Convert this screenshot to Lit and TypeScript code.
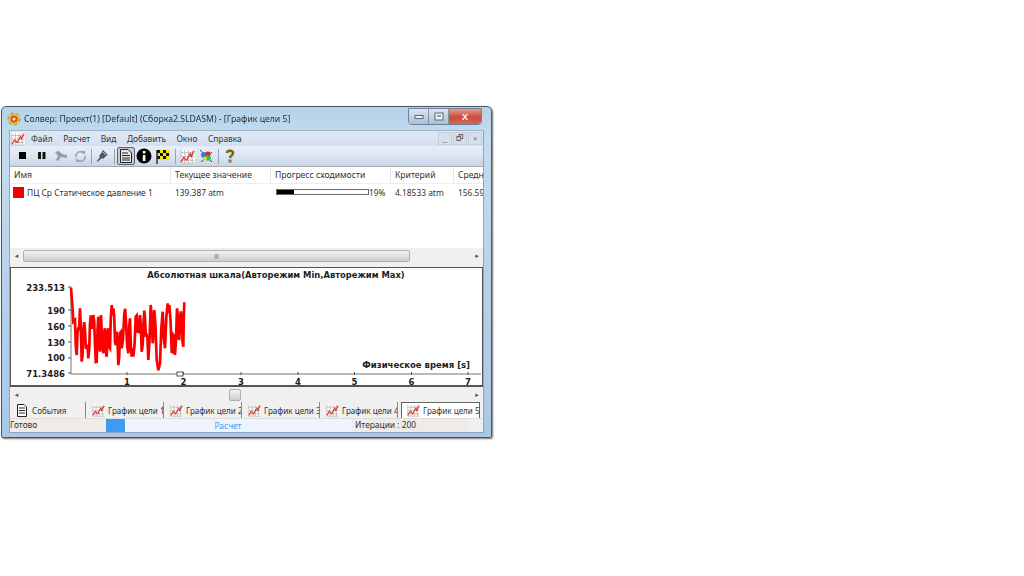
import { LitElement, html, css, svg } from "lit";
import { customElement } from "lit/decorators.js";

function chartIcon(size = 16) {
  return html`<svg class="ic" width=${size} height=${size} viewBox="0 0 16 16">
    <rect x="0.5" y="0.5" width="15" height="15" fill="#fff"/>
    <path d="M1 1V15H15M5 1V15M9 1V15M13 1V15M1 4H15M1 8H15M1 12H15" stroke="#b9b9b9" stroke-width="1" fill="none"/>
    <path d="M1 14L4 9L7 12L11 5L12 8L15 2" stroke="#e8342c" stroke-width="1.4" fill="none"/>
  </svg>`;
}

const TRACE: [number, number][] = [[18,8],[22,60],[25,110],[30,105],[35,210],[40,130],[45,70],[50,230],[55,140],[60,135],[65,190],[70,220],[75,115],[80,120],[85,90],[90,180],[95,230],[100,95],[105,200],[108,90],[115,205],[120,130],[125,215],[130,130],[135,190],[140,60],[145,70],[150,170],[155,140],[160,240],[165,145],[170,190],[178,85],[183,110],[190,205],[195,100],[200,215],[205,215],[212,95],[218,140],[225,90],[230,200],[236,105],[240,100],[245,150],[250,225],[257,60],[263,175],[268,75],[275,225],[285,235],[293,80],[300,190],[308,55],[313,60],[320,200],[325,150],[330,210],[336,70],[340,160],[345,110],[350,100],[355,185],[358,52]];

function tracePoints(): string {
  const out: string[] = [];
  TRACE.forEach(([x, y], i) => {
    out.push(`${(65 + x / 3).toFixed(1)},${(285 + y / 3).toFixed(1)}`);
    const n = TRACE[i + 1];
    if (n && i > 2) {
      const mx = (x + n[0]) / 2;
      const my = (y + n[1]) / 2 + (i % 2 ? 26 : -26);
      out.push(`${(65 + mx / 3).toFixed(1)},${(285 + my / 3).toFixed(1)}`);
    }
  });
  return out.join(" ");
}

@customElement("app-root")
export class AppRoot extends LitElement {
  static styles = css`
    :host { display: block; width: 1024px; height: 576px; background: #fff; overflow: hidden; font-family: "Noto Sans", sans-serif; font-size: 8.6px; color: #333; }
    .page { padding: 106px 0 0 1px; }
    .win { width: 491px; height: 332px; box-sizing: border-box; display: flex; flex-direction: column; border: 1px solid #4a5560; border-radius: 5px 5px 2px 2px; background: linear-gradient(#b4d2ea, #c3dcf0 30px, #a9c8e4); padding: 0 7px 0 7px; filter: blur(0.35px); box-shadow: 1px 1px 2px #777; }
    .title { height: 23px; flex: none; display: flex; align-items: center; gap: 3px; margin-left: -2px; font-size: 8.7px; color: #2a2f35; }
    .title .t { flex: 1; white-space: nowrap; }
    .wb { display: flex; align-self: flex-start; height: 15px; margin: 1px 2px 0 0; border: 1px solid #6d8198; border-radius: 0 0 4px 4px; overflow: hidden; }
    .wb span { display: flex; align-items: center; justify-content: center; width: 19px; background: linear-gradient(#dbe6f1, #aebfd1); border-right: 1px solid #8295a9; }
    .wb span.x { width: 32px; border: none; background: linear-gradient(#e99b8d, #c94a3a 55%, #d06a58); color: #fff; font: bold 9px "Liberation Sans", sans-serif; }
    .inner { flex: none; height: 303px; box-sizing: border-box; display: flex; flex-direction: column; background: #f0f0f0; border: 1px solid #8fa4b8; border-top-color: #a0b4c8; }
    .menu { height: 15px; flex: none; display: flex; align-items: center; background: linear-gradient(#dfe9f5, #d3e0f0); padding-left: 1px; font-size: 8.4px; }
    .menu .items { flex: 1; display: flex; gap: 10.5px; margin-left: 6px; }
    .mb { display: flex; gap: 1px; margin-right: 1px; }
    .mb span { width: 14px; height: 13px; box-sizing: border-box; border: 1px solid #c4cfdb; background: #d5e0ec; color: #666; font: 8px/11px "Liberation Sans", sans-serif; text-align: center; }
    .tools { height: 21px; box-sizing: border-box; flex: none; display: flex; align-items: center; gap: 1px; padding-left: 4px; background: linear-gradient(#e8eef8, #dce6f3 50%, #c7d5e8); border-bottom: 1px solid #a8a8a8; }
    .tb { width: 18px; height: 18px; display: flex; align-items: center; justify-content: center; flex: none; }
    .tb.on { box-sizing: border-box; border: 1px solid #5b6470; border-radius: 2px; background: #c4ccd5; margin-right: -1px; }
    .sep { width: 1px; height: 15px; background: #9aa3ad; margin: 0 1.5px; flex: none; }
    .sep.a { margin: 0 .5px; }
    .list { height: 81px; flex: none; background: #fff; overflow: hidden; }
    .head, .row { display: grid; grid-template-columns: 161px 100px 120px 63px 40px; white-space: nowrap; }
    .head { height: 17px; box-sizing: border-box; align-items: center; border-bottom: 1px solid #eee; }
    .head div { padding-left: 4px; border-right: 1px solid #e7e7e7; height: 100%; line-height: 16px; overflow: hidden; }
    .row { height: 16px; align-items: center; font-size: 8.4px; }
    .row > div { padding-left: 4px; overflow: hidden; }
    .name { display: flex; align-items: center; gap: 3px; padding-left: 3px !important; }
    .sw { width: 11px; height: 11px; background: #f20000; flex: none; }
    .prog { display: flex; align-items: center; gap: 0; padding-left: 5px !important; }
    .bar { width: 91px; height: 4px; border: 1px solid #666; background: #fff; box-sizing: content-box; flex: none; }
    .bar div { height: 100%; background: #000; }
    .hs { height: 15px; flex: none; display: flex; align-items: center; background: #f0f0f0; }
    .arr { width: 12px; flex: none; text-align: center; color: #555; font: 7px "DejaVu Sans", sans-serif; }
    .arr.l { width: 13px; }
    .thumb { box-sizing: border-box; height: 12px; border: 1px solid #b0b0b0; border-radius: 2px; background: linear-gradient(#f2f2f2, #cdcdcd); display: flex; align-items: center; justify-content: center; color: #555; font: 6px "Liberation Sans", sans-serif; flex: none; }
    .grow { flex: 1; }
    .chart { height: 120px; margin-top: 4px; flex: none; box-sizing: border-box; background: #fff; border: 1px solid #555; border-bottom-width: 2px; }
    .chart svg { display: block; overflow: visible; }
    .chart text { font-family: "DejaVu Sans", sans-serif; font-weight: bold; fill: #1d1d1d; font-size: 8.5px; }
    .tabs { height: 16px; flex: none; display: flex; align-items: stretch; background: #f0f0f0; }
    .tab { box-sizing: border-box; width: 78px; flex: none; display: flex; align-items: center; gap: 3px; padding-left: 6px; border-right: 1px solid #888; white-space: nowrap; overflow: hidden; font-size: 8.1px; }
    .tab .ic { flex: none; }
    .tab.ev { width: 76px; gap: 5px; padding-left: 7px; }
    .tab.on { background: #fff; border: 1px solid #666; border-bottom: none; width: 79px; margin-left: 3px; padding-left: 5px; }
    .status { height: 14px; flex: none; display: flex; align-items: center; background: #f0f0f0; font-size: 8.4px; border-top: 1px solid #ddd; box-sizing: border-box; }
    .s1 { width: 96px; flex: none; box-sizing: border-box; height: 100%; background: #f0ebe8; }
    .s2 { width: 19px; height: 100%; background: #3d9bf2; flex: none; }
    .s3 { flex: none; width: 227px; height: 100%; background: #eef4fb; color: #4a9cf0; display: flex; align-items: center; justify-content: center; padding-right: 21px; box-sizing: border-box; }
    .s4 { flex: none; width: 116px; height: 100%; padding-left: 3px; box-sizing: border-box; background: #f0ebe8; }
  `;

  render() {
    const yl = [["233.513", 290.5, 287], ["190", 313.5, 310], ["160", 329.5, 326], ["130", 345.5, 342], ["100", 361, 358], ["71.3486", 376.5, 373]] as const;
    const xl = [[1, 127], [2, 183.5], [3, 241], [4, 298], [5, 354.5], [6, 411.5], [7, 468]] as const;
    return html`<div class="page"><div class="win">
      <div class="title">
        <svg width="14" height="14" viewBox="0 0 14 14"><circle cx="7" cy="7" r="6" fill="#e9c23c"/><circle cx="7" cy="7" r="6" fill="none" stroke="#5aa35a" stroke-dasharray="3 3"/><circle cx="7" cy="7" r="3.6" fill="#e2483a"/><circle cx="7" cy="7" r="1.6" fill="#f6e7a0"/></svg>
        <span class="t">Солвер: Проект(1) [Default] (Сборка2.SLDASM) - [График цели 5]</span>
        <div class="wb">
          <span><svg width="10" height="6"><rect x="1" y="1.5" width="8" height="3" fill="#eef3f8" stroke="#56677a"/></svg></span>
          <span><svg width="10" height="9"><rect x="1" y="1" width="8" height="7" fill="#eef3f8" stroke="#56677a"/><rect x="3" y="3" width="4" height="2" fill="#8fa0b2"/></svg></span>
          <span class="x">X</span>
        </div>
      </div>
      <div class="inner">
        <div class="menu">
          ${chartIcon(14)}
          <div class="items"><span>Файл</span><span>Расчет</span><span>Вид</span><span>Добавить</span><span>Окно</span><span>Справка</span></div>
          <div class="mb"><span>_</span><span>🗗︎</span><span>×</span></div>
        </div>
        <div class="tools">
          <div class="tb"><svg width="8" height="8"><rect width="7" height="7" fill="#000"/></svg></div>
          <div class="tb"><svg width="8" height="8"><path d="M0 0h3v7H0zM4.5 0h3v7h-3z" fill="#111"/></svg></div>
          <div class="tb"><svg width="14" height="12" viewBox="0 0 14 12"><path d="M1 2L5 1L8 4L13 5V8L7 7L4 11L2 10L4 6Z" fill="#9b9b9b"/></svg></div>
          <div class="tb"><svg width="13" height="13" viewBox="0 0 13 13"><path d="M2 7A4.5 4.5 0 0 1 10 3.5M11 6A4.5 4.5 0 0 1 3 9.5" fill="none" stroke="#a3a3a3" stroke-width="1.6"/><path d="M8 1L11 1V5ZM2 8V12L5 12Z" fill="#a3a3a3"/></svg></div>
          <div class="sep a"></div>
          <div class="tb"><svg width="14" height="14" viewBox="0 0 14 14"><path d="M8 1L13 6L11 7L8 10L7 9L3 12.5L1.5 12.5L5 8L4 7L7 3Z" fill="#555"/><path d="M8 3L11 6" stroke="#ccc"/></svg></div>
          <div class="sep"></div>
          <div class="tb on"><svg width="12" height="14" viewBox="0 0 12 14"><path d="M.5.5H8L11.5 4V13.5H.5Z" fill="#e8e8e8" stroke="#222"/><path d="M2 4H8M2 6.5H10M2 9H10M2 11H10" stroke="#222"/></svg></div>
          <div class="tb"><svg width="16" height="16" viewBox="0 0 16 16"><circle cx="8" cy="8" r="7.5" fill="#000"/><rect x="6.8" y="7" width="2.6" height="6" fill="#fff"/><rect x="6.8" y="3" width="2.6" height="2.5" fill="#fff"/></svg></div>
          <div class="tb"><svg width="15" height="15" viewBox="0 0 15 15"><path d="M1 1H14V11H1Z" fill="#f5e21a"/><path d="M1 1h3v3H1zM7 1h3v3H7zM4 4h3v3H4zM10 4h3v3h-3zM1 7h3v3H1zM7 7h3v3H7z" fill="#111"/><path d="M1 1V15" stroke="#222" stroke-width="1.4"/></svg></div>
          <div class="sep"></div>
          <div class="tb">${chartIcon(15)}</div>
          <div class="tb"><svg width="16" height="16" viewBox="0 0 16 16"><path d="M2 2L14 14M14 4L3 14" stroke="#444"/><circle cx="6" cy="7" r="3" fill="#2a7de0"/><circle cx="10" cy="6" r="2.6" fill="#e2292a"/><circle cx="10" cy="10" r="2.8" fill="#2bc34a"/><circle cx="7" cy="10.5" r="2" fill="#f3d41d"/></svg></div>
          <div class="sep"></div>
          <div class="tb"><svg width="12" height="16" viewBox="0 0 12 16"><path d="M3 5C3 2 9 2 9 5C9 7.5 6 7.5 6 10" fill="none" stroke="#a89a20" stroke-width="3"/><rect x="4.5" y="11.5" width="3" height="3" fill="#8a7d20"/><path d="M3 5C3 2 9 2 9 5C9 7.5 6 7.5 6 10" fill="none" stroke="#333" stroke-width="1"/></svg></div>
        </div>
        <div class="list">
          <div class="head"><div>Имя</div><div>Текущее значение</div><div>Прогресс сходимости</div><div>Критерий</div><div>Средн</div></div>
          <div class="row">
            <div class="name"><span class="sw"></span><span>ПЦ Ср Статическое давление 1</span></div>
            <div>139.387 atm</div>
            <div class="prog"><div class="bar"><div style="width:19%"></div></div><span>19%</span></div>
            <div>4.18533 atm</div>
            <div>156.59</div>
          </div>
        </div>
        <div class="hs"><span class="arr l">◂</span><div class="thumb" style="width:387px">|||</div><span class="grow"></span><span class="arr">▸</span></div>
        <div class="chart"><svg width="470" height="117" viewBox="11 268 470 117">
          ${svg`
            <text x="276" y="278" text-anchor="middle" style="font-size:8.4px">Абсолютная шкала(Авторежим Min,Авторежим Max)</text>
            <path d="M71 287V374H481" stroke="#777" fill="none"/>
            ${yl.map(([t, y, c]) => svg`<text x="65" y=${y} text-anchor="end">${t}</text><path d="M68 ${c}H71" stroke="#555"/>`)}
            ${xl.map(([t, x]) => svg`<text x=${x} y="384.5" text-anchor="middle">${t}</text><path d="M${x} 372V375" stroke="#555"/>`)}
            <rect x="177" y="372" width="6" height="4" fill="#fff" stroke="#555"/>
            <text x="470" y="367.5" text-anchor="end">Физическое время [s]</text>
            <polyline points=${tracePoints()} fill="none" stroke="#fb0000" stroke-width="2.7"/>
          `}
        </svg></div>
        <div class="hs"><span class="arr l">◂</span><span style="width:206px"></span><div class="thumb" style="width:12px"></div><span class="grow"></span><span class="arr">▸</span></div>
        <div class="tabs">
          <div class="tab ev"><svg class="ic" width="10" height="13" viewBox="0 0 10 13"><path d="M.5.5H7L9.5 3V12.5H.5Z" fill="#fff" stroke="#222"/><path d="M2 4H8M2 6.5H8M2 9H8" stroke="#222"/></svg><span>События</span></div>
          <div class="tab">${chartIcon(13)}<span>График цели 1</span></div>
          <div class="tab">${chartIcon(13)}<span>График цели 2</span></div>
          <div class="tab">${chartIcon(13)}<span>График цели 3</span></div>
          <div class="tab">${chartIcon(13)}<span>График цели 4</span></div>
          <div class="tab on">${chartIcon(13)}<span>График цели 5</span></div>
        </div>
        <div class="status">
          <div class="s1">Готово</div><div class="s2"></div><div class="s3">Расчет</div><div class="s4">Итерации : 200</div>
        </div>
      </div>
    </div></div>`;
  }
}
